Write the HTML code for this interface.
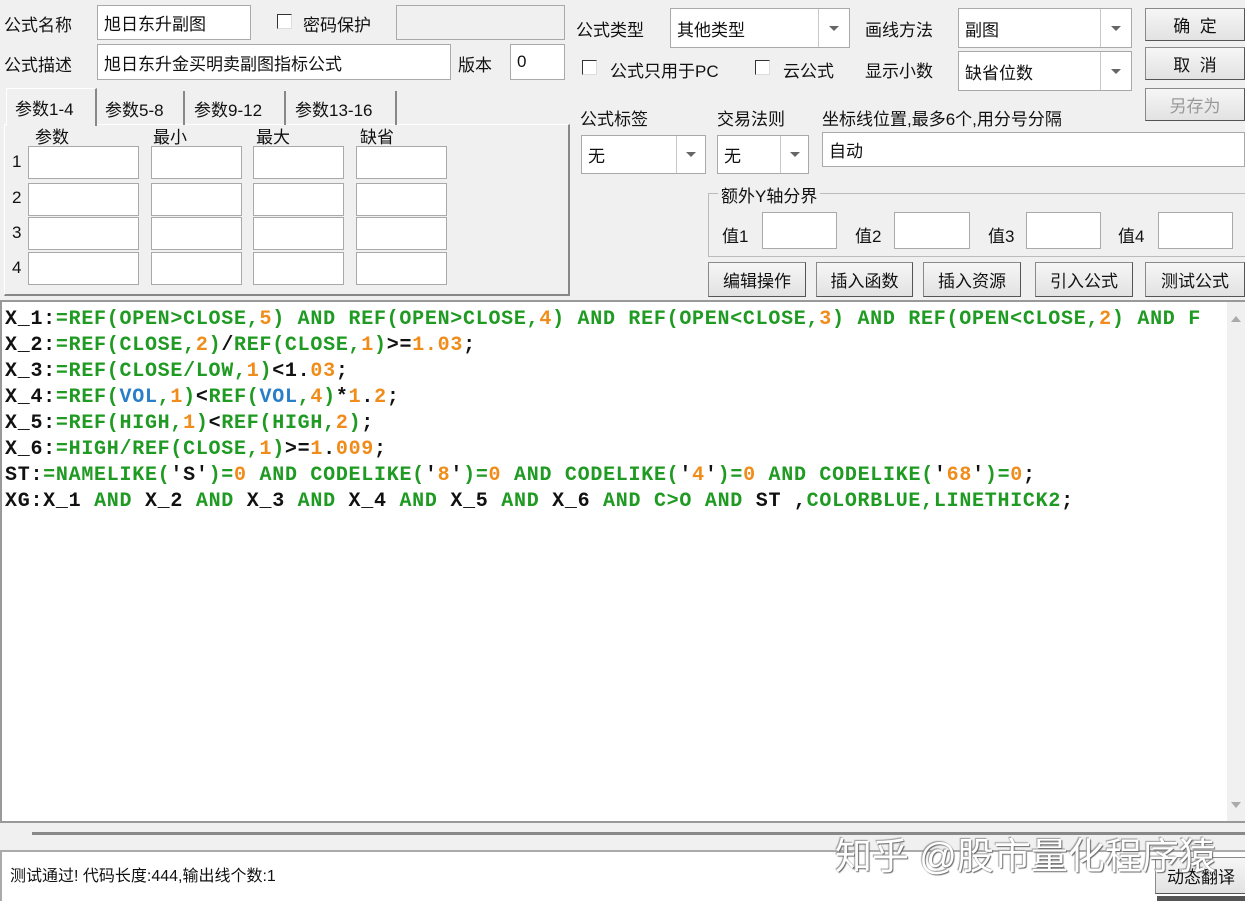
<!DOCTYPE html>
<html><head><meta charset="utf-8"><style>
*{box-sizing:border-box;margin:0;padding:0}
body{width:1245px;height:901px;background:#f0f0f0;position:relative;overflow:hidden;font-family:"Liberation Sans","Microsoft YaHei","Noto Sans CJK SC",sans-serif;font-size:17px;color:#111}
.a{position:absolute;white-space:nowrap}
.in{position:absolute;background:#fff;border:1px solid #a9a9a9;padding-left:6px;display:flex;align-items:center}
.dis{background:#f0f0f0}
.cb{position:absolute;width:15px;height:15px;background:#fff;border:1px solid #333;border-right-color:#ddd;border-bottom-color:#ddd}
.combo{position:absolute;background:#fff;border:1px solid #a9a9a9;padding-left:6px;display:flex;align-items:center}
.combo .d{position:absolute;right:0;top:0;bottom:0;border-left:1px solid #c8c8c8;display:flex;align-items:center;justify-content:center}
.combo .d:after{content:"";border-left:5px solid transparent;border-right:5px solid transparent;border-top:5px solid #666}
.btn{position:absolute;background:linear-gradient(#f6f6f6,#e2e2e2);border:1px solid #8a8a8a;border-bottom-color:#555;border-right-color:#555;display:flex;align-items:center;justify-content:center;font-size:17px}
.tab{position:absolute;top:91px;height:34px;border-right:2px solid #888;display:flex;align-items:center;padding-left:8px;font-size:17px}
.code{position:absolute;left:0;top:300px;width:1245px;height:523px;background:#fff;border:2px solid #999;border-right:none}
.code pre{position:absolute;left:3px;top:5px;font-family:"Liberation Mono","DejaVu Sans Mono",monospace;font-weight:bold;font-size:20px;letter-spacing:0.72px;line-height:26px;color:#111}
.g{color:#1f9a22}.o{color:#f08c1a}.b{color:#2a7ec8}
</style></head><body>
<div class="a" style="left:4px;top:11px">公式名称</div>
<div class="in" style="left:97px;top:5px;width:154px;height:35px">旭日东升副图</div>
<div class="cb" style="left:277px;top:14px"></div>
<div class="a" style="left:303px;top:11px">密码保护</div>
<div class="in dis" style="left:396px;top:5px;width:169px;height:35px"></div>
<div class="a" style="left:4px;top:51px">公式描述</div>
<div class="in" style="left:97px;top:44px;width:354px;height:36px">旭日东升金买明卖副图指标公式</div>
<div class="a" style="left:458px;top:51px">版本</div>
<div class="in" style="left:510px;top:44px;width:55px;height:36px">0</div>

<div style="position:absolute;left:4px;top:124px;width:566px;height:172px;border:1px solid #fff;border-right:2px solid #888;border-bottom:2px solid #888"></div>
<div class="tab" style="left:6px;width:91px;top:88px;height:38px;background:#f0f0f0;border-left:1px solid #fff;border-top:1px solid #fff">参数1-4</div>
<div class="tab" style="left:97px;width:88px">参数5-8</div>
<div class="tab" style="left:186px;width:100px">参数9-12</div>
<div class="tab" style="left:287px;width:110px">参数13-16</div>
<div class="a" style="left:35px;top:123px">参数</div>
<div class="a" style="left:153px;top:123px">最小</div>
<div class="a" style="left:256px;top:123px">最大</div>
<div class="a" style="left:360px;top:123px">缺省</div>
<div class="a" style="left:12px;top:152px">1</div>
<div class="a" style="left:12px;top:188px">2</div>
<div class="a" style="left:12px;top:223px">3</div>
<div class="a" style="left:12px;top:258px">4</div>
<div class="in" style="left:28px;top:146px;width:111px;height:33px"></div><div class="in" style="left:151px;top:146px;width:91px;height:33px"></div><div class="in" style="left:253px;top:146px;width:91px;height:33px"></div><div class="in" style="left:356px;top:146px;width:91px;height:33px"></div>
<div class="in" style="left:28px;top:183px;width:111px;height:33px"></div><div class="in" style="left:151px;top:183px;width:91px;height:33px"></div><div class="in" style="left:253px;top:183px;width:91px;height:33px"></div><div class="in" style="left:356px;top:183px;width:91px;height:33px"></div>
<div class="in" style="left:28px;top:217px;width:111px;height:33px"></div><div class="in" style="left:151px;top:217px;width:91px;height:33px"></div><div class="in" style="left:253px;top:217px;width:91px;height:33px"></div><div class="in" style="left:356px;top:217px;width:91px;height:33px"></div>
<div class="in" style="left:28px;top:252px;width:111px;height:33px"></div><div class="in" style="left:151px;top:252px;width:91px;height:33px"></div><div class="in" style="left:253px;top:252px;width:91px;height:33px"></div><div class="in" style="left:356px;top:252px;width:91px;height:33px"></div>

<div class="a" style="left:576px;top:16px">公式类型</div>
<div class="combo" style="left:670px;top:8px;width:180px;height:40px">其他类型<div class="d" style="width:31px"></div></div>
<div class="a" style="left:865px;top:16px">画线方法</div>
<div class="combo" style="left:958px;top:8px;width:174px;height:40px">副图<div class="d" style="width:31px"></div></div>
<div class="btn" style="left:1145px;top:8px;width:100px;height:33px">确&nbsp;&nbsp;定</div>
<div class="cb" style="left:582px;top:60px"></div>
<div class="a" style="left:610px;top:57px">公式只用于PC</div>
<div class="cb" style="left:755px;top:60px"></div>
<div class="a" style="left:783px;top:57px">云公式</div>
<div class="a" style="left:865px;top:57px">显示小数</div>
<div class="combo" style="left:958px;top:51px;width:174px;height:40px">缺省位数<div class="d" style="width:31px"></div></div>
<div class="btn" style="left:1145px;top:47px;width:100px;height:33px">取&nbsp;&nbsp;消</div>
<div class="btn" style="left:1145px;top:88px;width:100px;height:33px;color:#999">另存为</div>
<div class="a" style="left:580px;top:105px">公式标签</div>
<div class="a" style="left:717px;top:105px">交易法则</div>
<div class="a" style="left:822px;top:105px">坐标线位置,最多6个,用分号分隔</div>
<div class="combo" style="left:581px;top:135px;width:125px;height:39px">无<div class="d" style="width:29px"></div></div>
<div class="combo" style="left:717px;top:135px;width:92px;height:39px">无<div class="d" style="width:28px"></div></div>
<div class="in" style="left:822px;top:132px;width:423px;height:35px">自动</div>
<div style="position:absolute;left:708px;top:193px;width:540px;height:64px;border:1px solid #bbb"></div>
<div class="a" style="left:718px;top:182px;background:#f0f0f0;padding:0 3px">额外Y轴分界</div>
<div class="a" style="left:722px;top:222px">值1</div><div class="in" style="left:762px;top:212px;width:75px;height:37px"></div>
<div class="a" style="left:855px;top:222px">值2</div><div class="in" style="left:894px;top:212px;width:76px;height:37px"></div>
<div class="a" style="left:988px;top:222px">值3</div><div class="in" style="left:1026px;top:212px;width:75px;height:37px"></div>
<div class="a" style="left:1118px;top:222px">值4</div><div class="in" style="left:1158px;top:212px;width:75px;height:37px"></div>
<div class="btn" style="left:708px;top:262px;width:98px;height:35px">编辑操作</div>
<div class="btn" style="left:816px;top:262px;width:97px;height:35px">插入函数</div>
<div class="btn" style="left:923px;top:262px;width:98px;height:35px">插入资源</div>
<div class="btn" style="left:1035px;top:262px;width:98px;height:35px">引入公式</div>
<div class="btn" style="left:1145px;top:262px;width:100px;height:35px">测试公式</div>

<div class="code"><pre>X_1:<span class="g">=REF(OPEN&gt;CLOSE,</span><span class="o">5</span><span class="g">) AND REF(OPEN&gt;CLOSE,</span><span class="o">4</span><span class="g">) AND REF(OPEN&lt;CLOSE,</span><span class="o">3</span><span class="g">) AND REF(OPEN&lt;CLOSE,</span><span class="o">2</span><span class="g">) AND F</span>
X_2:<span class="g">=REF(CLOSE,</span><span class="o">2</span><span class="g">)</span>/<span class="g">REF(CLOSE,</span><span class="o">1</span><span class="g">)</span>&gt;=<span class="o">1.03</span>;
X_3:<span class="g">=REF(CLOSE/LOW,</span><span class="o">1</span><span class="g">)</span>&lt;1.<span class="o">03</span>;
X_4:<span class="g">=REF(</span><span class="b">VOL</span><span class="g">,</span><span class="o">1</span><span class="g">)</span>&lt;<span class="g">REF(</span><span class="b">VOL</span><span class="g">,</span><span class="o">4</span><span class="g">)</span>*<span class="o">1</span>.<span class="o">2</span>;
X_5:<span class="g">=REF(HIGH,</span><span class="o">1</span><span class="g">)</span>&lt;<span class="g">REF(HIGH,</span><span class="o">2</span><span class="g">)</span>;
X_6:<span class="g">=HIGH/REF(CLOSE,</span><span class="o">1</span><span class="g">)</span>&gt;=<span class="o">1</span>.<span class="o">009</span>;
ST:<span class="g">=NAMELIKE(</span>'S'<span class="g">)=</span><span class="o">0</span> <span class="g">AND CODELIKE(</span>'<span class="o">8</span>'<span class="g">)=</span><span class="o">0</span> <span class="g">AND CODELIKE(</span>'<span class="o">4</span>'<span class="g">)=</span><span class="o">0</span> <span class="g">AND CODELIKE(</span>'<span class="o">68</span>'<span class="g">)=</span><span class="o">0</span>;
XG:X_1 <span class="g">AND</span> X_2 <span class="g">AND</span> X_3 <span class="g">AND</span> X_4 <span class="g">AND</span> X_5 <span class="g">AND</span> X_6 <span class="g">AND</span> <span class="g">C&gt;O</span> <span class="g">AND</span> ST ,<span class="g">COLORBLUE,LINETHICK2</span>;</pre>
<div style="position:absolute;right:0;top:0;width:18px;height:519px;background:#f0f0f0"></div>
<div style="position:absolute;right:4px;top:14px;border-left:5px solid transparent;border-right:5px solid transparent;border-bottom:6px solid #aaa"></div>
<div style="position:absolute;right:4px;top:500px;border-left:5px solid transparent;border-right:5px solid transparent;border-top:6px solid #aaa"></div>
</div>
<div style="position:absolute;left:32px;top:832px;width:1213px;height:3px;background:#888"></div>
<div style="position:absolute;left:0;top:850px;width:1245px;height:51px;background:#fff;border-top:2px solid #aaa;border-left:2px solid #aaa"></div>
<div class="a" style="left:10px;top:862px;font-size:16px">测试通过! 代码长度:444,输出线个数:1</div>
<div class="btn" style="left:1155px;top:857px;width:92px;height:37px;font-size:17px">动态翻译</div>
<div style="position:absolute;left:1157px;top:896px;width:88px;height:5px;background:#555"></div>
<div class="a" style="left:835px;top:826px;font-size:37px;color:#fff;text-shadow:1px 1px 1px #666,-1px -1px 1px #999">知乎 @股市量化程序猿</div>
</body></html>
